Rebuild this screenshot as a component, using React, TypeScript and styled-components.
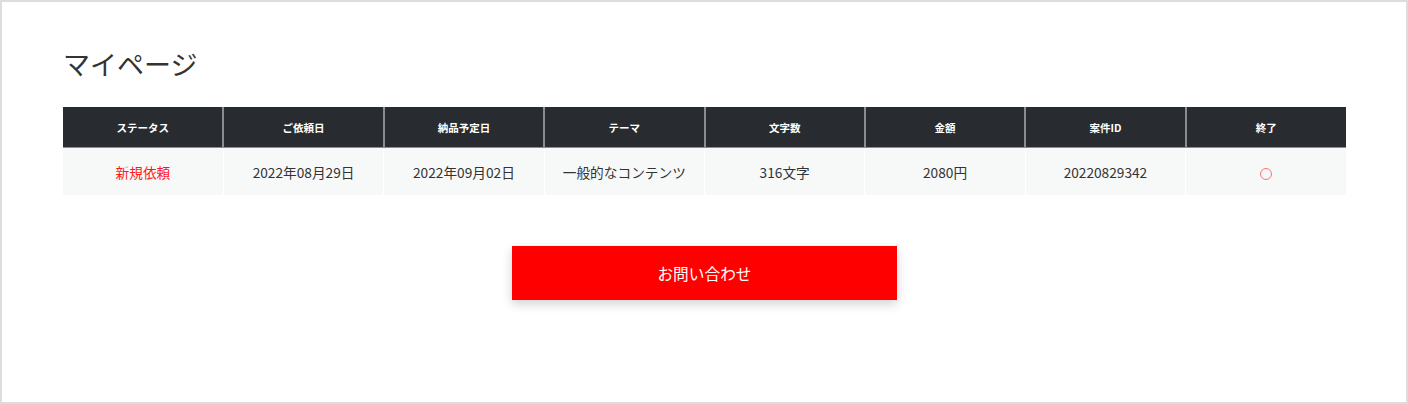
import React from "react";
import styled, { createGlobalStyle } from "styled-components";

const GlobalStyle = createGlobalStyle`
  html, body {
    margin: 0;
    padding: 0;
    background: #fff;
  }
  body {
    font-family: "Noto Sans CJK JP", "Noto Sans", sans-serif;
    color: #333;
  }
`;

const Frame = styled.div`
  box-sizing: border-box;
  width: 1408px;
  height: 404px;
  border: 2px solid #dddddd;
  padding: 40px 60px 0 61px;
`;

const Title = styled.h1`
  margin: 0 0 21px;
  font-size: 27px;
  font-weight: 400;
  line-height: 44px;
  color: #333;
`;

const Table = styled.table`
  width: 100%;
  border-collapse: collapse;
  table-layout: fixed;
`;

const HeadCell = styled.th`
  height: 40px;
  padding: 0;
  background: #282c30;
  color: #fff;
  font-size: 10.5px;
  font-weight: 700;
  text-align: center;
  border-left: 2px solid #8a8c8e;
  border-bottom: 1px solid #8a8c8e;
  &:first-child {
    border-left: none;
  }
`;

const Cell = styled.td<{ $accent?: boolean }>`
  height: 47px;
  padding: 0;
  background: #f7f8f8;
  color: ${({ $accent }) => ($accent ? "#ff1a1a" : "#333")};
  font-size: 13.7px;
  text-align: center;
  border-left: 1px solid #ffffff;
  &:first-child {
    border-left: none;
  }
`;

const Circle = styled.span`
  display: inline-block;
  box-sizing: border-box;
  width: 12px;
  height: 12px;
  border: 1.5px solid #ff7373;
  border-radius: 50%;
  vertical-align: middle;
`;

const Actions = styled.div`
  display: flex;
  justify-content: center;
  margin-top: 51px;
`;

const ContactButton = styled.button`
  width: 385px;
  height: 54px;
  border: none;
  background: #ff0000;
  color: #fff;
  font-family: "Noto Sans CJK JP", sans-serif;
  font-size: 15.7px;
  box-shadow: 0 4px 10px rgba(0, 0, 0, 0.18);
  cursor: pointer;
`;

const headers = ["ステータス", "ご依頼日", "納品予定日", "テーマ", "文字数", "金額", "案件ID", "終了"];

const row = ["2022年08月29日", "2022年09月02日", "一般的なコンテンツ", "316文字", "2080円", "20220829342"];

export default function App() {
  return (
    <>
      <GlobalStyle />
      <Frame>
        <Title>マイページ</Title>
        <Table>
          <thead>
            <tr>
              {headers.map(h => (
                <HeadCell key={h}>{h}</HeadCell>
              ))}
            </tr>
          </thead>
          <tbody>
            <tr>
              <Cell $accent>新規依頼</Cell>
              {row.map(v => (
                <Cell key={v}>{v}</Cell>
              ))}
              <Cell>
                <Circle />
              </Cell>
            </tr>
          </tbody>
        </Table>
        <Actions>
          <ContactButton>お問い合わせ</ContactButton>
        </Actions>
      </Frame>
    </>
  );
}
